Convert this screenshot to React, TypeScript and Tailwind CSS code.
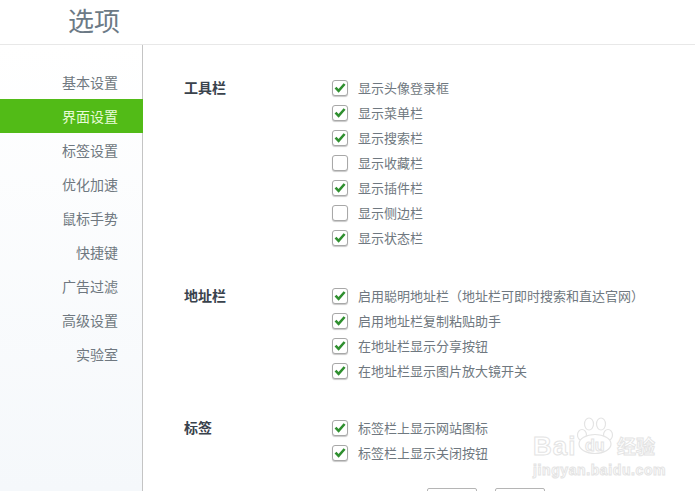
const font = { fontFamily: '"Noto Sans CJK SC", "Liberation Sans", sans-serif' };
const latin = { fontFamily: '"Liberation Sans", sans-serif' };
const nav = ['基本设置', '界面设置', '标签设置', '优化加速', '鼠标手势', '快捷键', '广告过滤', '高级设置', '实验室'];
type Item = [string, boolean];
const sections: { title: string; items: Item[]; cls: string }[] = [
  {
    title: '工具栏',
    cls: 'mt-[30px]',
    items: [
      ['显示头像登录框', true],
      ['显示菜单栏', true],
      ['显示搜索栏', true],
      ['显示收藏栏', false],
      ['显示插件栏', true],
      ['显示侧边栏', false],
      ['显示状态栏', true],
    ],
  },
  {
    title: '地址栏',
    cls: 'mt-[33px]',
    items: [
      ['启用聪明地址栏（地址栏可即时搜索和直达官网）', true],
      ['启用地址栏复制粘贴助手', true],
      ['在地址栏显示分享按钮', true],
      ['在地址栏显示图片放大镜开关', true],
    ],
  },
  {
    title: '标签',
    cls: 'mt-[32px]',
    items: [
      ['标签栏上显示网站图标', true],
      ['标签栏上显示关闭按钮', true],
    ],
  },
];

function Check({ on }: { on: boolean }) {
  return (
    <span className="w-[16px] h-[16px] shrink-0 rounded-[3px] border border-[#a8a8a8] bg-white shadow-[0_1px_1px_rgba(0,0,0,0.22)] flex items-center justify-center">
      {on && (
        <svg width="12" height="11" viewBox="0 0 12 11">
          <path d="M1.5 5.6 L4.6 8.8 L10.6 2" fill="none" stroke="#2f8f2f" strokeWidth="2.6" />
        </svg>
      )}
    </span>
  );
}

export default function App() {
  return (
    <div className="relative w-[695px] h-[491px] overflow-hidden bg-white" style={font}>
      <header className="h-[45px] border-b border-[#e8e8e8] pl-[68px] flex items-center">
        <h1 className="text-[26px] leading-[40px] -mt-[5px] font-normal text-[#6c7a86]">选项</h1>
      </header>
      <div className="flex h-[446px]">
        <nav className="w-[143px] shrink-0 border-r border-[#c4c4c4] bg-gradient-to-b from-white to-[#f5f8fb] pt-[20px]">
          {nav.map((n, i) => (
            <div
              key={n}
              className={`h-[34px] flex items-center justify-end text-[14px] ${
                i === 1 ? 'bg-[#52bb17] text-[#e8fbd8] -mr-px pr-[25px]' : 'text-[#6f7880] pr-[24px]'
              }`}
            >
              {n}
            </div>
          ))}
        </nav>
        <main className="flex-1 pl-[41px]">
          {sections.map((s) => (
            <section key={s.title} className={`flex ${s.cls}`}>
              <h2 className="w-[148px] shrink-0 text-[14px] leading-[25px] font-bold text-[#39424c]">{s.title}</h2>
              <ul>
                {s.items.map(([t, on]) => (
                  <li key={t} className="h-[25px] flex items-center gap-[10px] text-[13px] text-[#6f7880] whitespace-nowrap">
                    <Check on={on} />
                    <span>{t}</span>
                  </li>
                ))}
              </ul>
            </section>
          ))}
          <div className="flex gap-[18px] ml-[243px] mt-[23px]">
            <button className="w-[50px] h-[24px] border border-[#b5b5b5] rounded-[2px] bg-white" />
            <button className="w-[50px] h-[24px] border border-[#b5b5b5] rounded-[2px] bg-white" />
          </div>
        </main>
      </div>
      <div className="absolute left-[533px] top-[415px] w-[160px] text-white [-webkit-text-stroke:1px_#e4e4e4] select-none">
        <svg className="absolute left-[42px] top-[2px]" width="40" height="38" viewBox="0 0 40 38" fill="white" stroke="#e4e4e4" strokeWidth="1.2">
          <ellipse cx="7" cy="18" rx="4.5" ry="5.5" />
          <ellipse cx="14" cy="7" rx="4.5" ry="6" />
          <ellipse cx="26" cy="7" rx="4.5" ry="6" />
          <ellipse cx="33" cy="18" rx="4.5" ry="5.5" />
          <ellipse cx="20" cy="27" rx="16" ry="9.5" />
        </svg>
        <div className="absolute left-0 top-[17px] text-[26px] leading-[28px] font-bold tracking-[1px]" style={latin}>
          Bai
        </div>
        <div className="absolute left-[52px] top-[21px] text-[16px] leading-[20px] font-bold" style={latin}>
          du
        </div>
        <div className="absolute left-[84px] top-[18px] text-[19px] leading-[26px] font-bold">经验</div>
        <div className="absolute left-0 top-[46px] text-[14px] leading-[18px] font-bold tracking-[0.6px]" style={latin}>
          jingyan.baidu.com
        </div>
      </div>
    </div>
  );
}
